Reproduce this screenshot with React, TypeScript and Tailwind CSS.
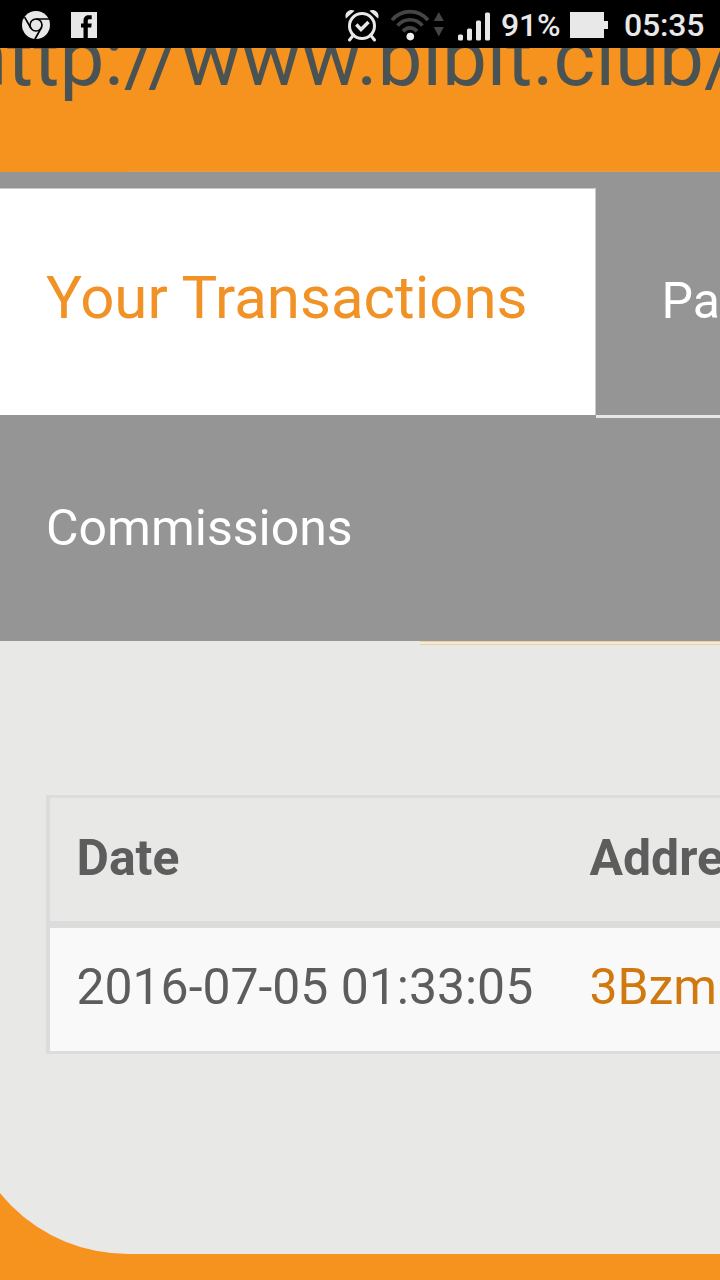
import React from "react";

function ChromeIcon() {
  return (
    <svg className="mt-[2px] ml-[21px] h-[30px] w-[30px] shrink-0" viewBox="0 0 30 30">
      <circle cx="15" cy="15" r="14" fill="#e8e8e8" />
      <g fill="none" stroke="#000" strokeWidth="1.7">
        <circle cx="15" cy="15" r="6" />
        <path d="M15 9H28.5M9.8 18L3.6 7.2M20.2 18L14 29" />
      </g>
    </svg>
  );
}

function FacebookIcon() {
  return (
    <svg className="mt-[2px] ml-5 h-[26px] w-[26px] shrink-0" viewBox="0 0 26 26">
      <path d="M0 0H26V26H0Z" fill="#e8e8e8" />
      <path d="M12.5 26V15.5H10V11.5H12.5V9C12.5 5.2 14.5 3.3 17.8 3.3H20.7V7.2H18.5C17.2 7.2 16.8 7.8 16.8 9V11.5H20.7L20.2 15.5H16.8V26Z" fill="#000" />
    </svg>
  );
}

function AlarmIcon() {
  return (
    <svg className="h-9 w-[36px] shrink-0" viewBox="0 0 36 36">
      <g fill="none" stroke="#e8e8e8" strokeWidth="3">
        <circle cx="18" cy="20" r="12.5" />
        <path d="M12.3 18.5L17 23.5L24.5 16" strokeWidth="3.4" />
        <path d="M9.5 29L5.5 34M26.5 29L30.5 34" strokeLinecap="round" />
      </g>
      <path d="M2 12.5C-.4 7 5.6 2.2 10.6 4.8ZM34 12.5C36.4 7 30.4 2.2 25.4 4.8Z" fill="#e8e8e8" />
    </svg>
  );
}

function WifiIcon() {
  return (
    <svg className="ml-[11px] h-9 w-[54px] shrink-0" viewBox="0 0 54 36">
      <g fill="none" stroke="#454545" strokeWidth="3.6">
        <path d="M1 14.2C10.5 2.8 27.5 2.8 37 14.2" />
        <path d="M6.6 19.6C13.2 11.8 24.8 11.8 31.4 19.6" />
        <path d="M12 25.2C15.8 20.8 22.2 20.8 26 25.2" />
      </g>
      <circle cx="19.3" cy="30.6" r="3.8" fill="#f0f0f0" />
      <path d="M47.8 6L52.8 15H42.8ZM42.8 21H52.8L47.8 30.5Z" fill="#454545" />
    </svg>
  );
}

function SignalIcon() {
  return (
    <svg className="ml-3 h-[30px] w-[34px] shrink-0" viewBox="0 0 34 30" fill="#e8e8e8">
      <rect x="1" y="23.5" width="5" height="6" rx="1.5" />
      <rect x="10" y="17.5" width="5" height="12" rx="1.5" />
      <rect x="19" y="9.5" width="5" height="20" rx="1.5" />
      <rect x="28" y="1.5" width="5" height="28" rx="1.5" />
    </svg>
  );
}

function BatteryIcon() {
  return (
    <svg className="mt-[2px] h-[26px] w-[38px] shrink-0" viewBox="0 0 38 26">
      <path d="M0 0H34V9H38V17H34V26H0Z" fill="#e8e8e8" />
    </svg>
  );
}

function StatusBar() {
  return (
    <header className="flex h-12 shrink-0 items-center bg-black text-[32px] leading-[48px] font-medium text-[#e8e8e8]">
      <ChromeIcon />
      <FacebookIcon />
      <div className="ml-[247px] flex items-center">
        <AlarmIcon />
        <WifiIcon />
        <div className="mt-[4px] flex">
          <SignalIcon />
        </div>
      </div>
      <span className="ml-[10px] h-12 w-[69px] shrink-0 pt-px tracking-[-0.2px]">91%</span>
      <BatteryIcon />
      <span className="ml-4 h-12 pt-px tracking-[-0.2px]">05:35</span>
    </header>
  );
}

export default function App() {
  return (
    <div className="flex h-[1280px] w-[720px] flex-col overflow-hidden bg-[#f6921e] font-['Roboto',sans-serif] whitespace-nowrap">
      <StatusBar />
      <div className="h-[123px] shrink-0 overflow-hidden">
        <p className="-mt-[38px] -ml-[37px] text-[80px] leading-[96px] text-[#4a5354]">http://www.bibit.club/</p>
      </div>
      <div className="flex">
        <div className="w-32 shrink-0" />
        <div className="h-px grow bg-[#dc9d4f]" />
      </div>

      <nav className="shrink-0 bg-[#959595] pt-4 text-[50px] text-white">
        <div className="flex h-[227px]">
          <div className="w-[596px] shrink-0 border-t border-r border-[#cacaca] bg-white pt-[74px] pl-[46px] text-[60px] leading-[70px] text-[#f09226]">
            Your Transactions
          </div>
          <div className="h-[230px] grow overflow-hidden border-b-[3px] border-[#e6e6e6] pt-[83px] pl-[65.5px] leading-[60px]">
            Pa
          </div>
        </div>
        <div className="h-[226px] pt-[83px] pl-[46px] leading-[60px]">Commissions</div>
      </nav>

      <main className="-ml-[37px] h-[613px] shrink-0 overflow-hidden rounded-bl-[165px] bg-[#e8e8e7] pl-[37px]">
        <div className="flex">
          <div className="w-[420px] shrink-0" />
          <div className="h-1 grow border-y border-[#e4d3b2] bg-[#fbe9cb]" />
        </div>
        <div className="mt-[150px] ml-[46px] grid w-[900px] grid-cols-[513px_1fr] border-[3px] border-l-4 border-[#dcdcdc] text-[49.9px] leading-[60px] text-[#5d5d5d]">
          <div className="h-[130px] border-b-[7px] border-[#dcdcdc] pt-[30px] pl-[26.5px] font-bold">Date</div>
          <div className="h-[130px] border-b-[7px] border-[#dcdcdc] pt-[30px] pl-[26.5px] font-bold">Address</div>
          <div className="h-[123px] bg-[#f9f9f9] pt-[29px] pl-[26.5px]">2016-07-05 01:33:05</div>
          <div className="h-[123px] bg-[#f9f9f9] pt-[29px] pl-[26.5px] text-[#d0790f]">3Bzm</div>
        </div>
      </main>
    </div>
  );
}
